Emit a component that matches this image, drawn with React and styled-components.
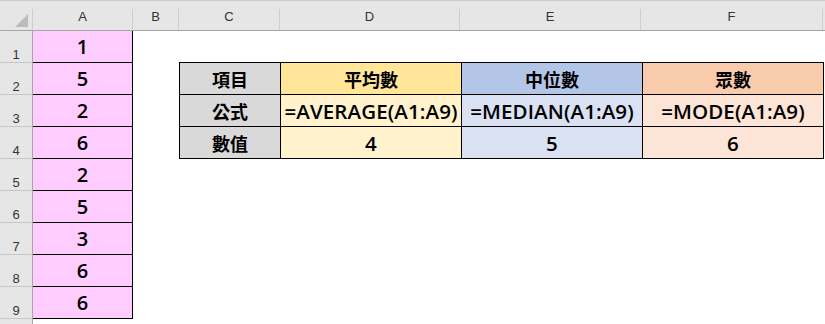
import styled, { createGlobalStyle } from "styled-components";

const GlobalStyle = createGlobalStyle`
  html, body {
    margin: 0;
    padding: 0;
    background: #ffffff;
  }
  body {
    width: 825px;
    height: 324px;
    overflow: hidden;
  }
`;

const columns = [
  { key: "A", width: 100 },
  { key: "B", width: 46 },
  { key: "C", width: 101 },
  { key: "D", width: 180 },
  { key: "E", width: 181 },
  { key: "F", width: 182 },
];

const values = [1, 5, 2, 6, 2, 5, 3, 6, 6];

const summary = [
  { head: "平均數", formula: "=AVERAGE(A1:A9)", result: 4, tone: "yellow" },
  { head: "中位數", formula: "=MEDIAN(A1:A9)", result: 5, tone: "blue" },
  { head: "眾數", formula: "=MODE(A1:A9)", result: 6, tone: "orange" },
];

const tones = {
  yellow: { head: "#ffe699", body: "#fff2cc" },
  blue: { head: "#b4c6e7", body: "#d9e1f2" },
  orange: { head: "#f8cbad", body: "#fce4d6" },
};

export default function App() {
  return (
    <>
      <GlobalStyle />
      <Sheet>
        <TopStrip />
        <HeaderRow>
          <Corner>
            <CornerMark />
          </Corner>
          {columns.map((c) => (
            <ColHead key={c.key} $w={c.width}>
              {c.key}
            </ColHead>
          ))}
        </HeaderRow>

        <Body>
          <RowHeads>
            {values.map((_, i) => (
              <RowHead key={i}>{i + 1}</RowHead>
            ))}
            <RowHead />
          </RowHeads>

          <ColumnA>
            {values.map((v, i) => (
              <PinkCell key={i}>{v}</PinkCell>
            ))}
          </ColumnA>

          <Spacer />

          <TableArea>
            <Stats>
              <tbody>
                <tr>
                  <Label>項目</Label>
                  {summary.map((s) => (
                    <Cell key={s.head} $bg={tones[s.tone].head}>
                      {s.head}
                    </Cell>
                  ))}
                </tr>
                <tr>
                  <Label>公式</Label>
                  {summary.map((s) => (
                    <Cell key={s.head} $bg={tones[s.tone].body} $latin>
                      {s.formula}
                    </Cell>
                  ))}
                </tr>
                <tr>
                  <Label>數值</Label>
                  {summary.map((s) => (
                    <Cell key={s.head} $bg={tones[s.tone].body} $latin>
                      {s.result}
                    </Cell>
                  ))}
                </tr>
              </tbody>
            </Stats>
          </TableArea>
        </Body>
      </Sheet>
    </>
  );
}

const Sheet = styled.div`
  display: flex;
  flex-direction: column;
  width: 825px;
  height: 324px;
  overflow: hidden;
  font-family: "Liberation Sans", "Noto Sans CJK TC", sans-serif;
`;

const TopStrip = styled.div`
  height: 1px;
  background: #f3f3f3;
  border-bottom: 1px solid #c9c9c9;
`;

const HeaderRow = styled.div`
  display: flex;
  height: 30px;
  background: #e6e6e6;
  border-bottom: 1px solid #a6a6a6;
`;

const Corner = styled.div`
  position: relative;
  width: 32px;
  flex: none;
  border-right: 1px solid #cfcfcf;
  margin-top: 8px;
`;

const CornerMark = styled.div`
  position: absolute;
  right: 4px;
  bottom: 3px;
  width: 0;
  height: 0;
  border-left: 13px solid transparent;
  border-bottom: 13px solid #bcbcbc;
`;

const ColHead = styled.div`
  flex: none;
  width: ${(p) => p.$w}px;
  display: flex;
  align-items: center;
  justify-content: center;
  box-sizing: border-box;
  margin-top: 8px;
  padding-bottom: 6px;
  border-right: 1px solid #cfcfcf;
  font-size: 13px;
  color: #333;
`;

const Body = styled.div`
  display: flex;
  align-items: flex-start;
`;

const RowHeads = styled.div`
  display: flex;
  flex-direction: column;
  width: 32px;
  flex: none;
  background: #e6e6e6;
  border-right: 1px solid #a6a6a6;
`;

const RowHead = styled.div`
  height: 30px;
  border-bottom: 1px solid #c6c6c6;
  display: flex;
  align-items: flex-end;
  justify-content: center;
  padding-bottom: 1px;
  font-size: 13px;
  color: #333;
  line-height: 1;
`;

const ColumnA = styled.div`
  display: flex;
  flex-direction: column;
  width: 100px;
  flex: none;
`;

const PinkCell = styled.div`
  height: 32px;
  box-sizing: border-box;
  background: #ffccff;
  border-right: 1px solid #000;
  border-bottom: 1px solid #000;
  display: flex;
  align-items: center;
  justify-content: center;
  font-family: "Open Sans", "Noto Sans CJK TC", sans-serif;
  font-weight: 600;
  font-size: 20px;
  color: #000;
`;

const Spacer = styled.div`
  width: 46px;
  flex: none;
`;

const TableArea = styled.div`
  padding-top: 31px;
`;

const Stats = styled.table`
  border-collapse: collapse;
  table-layout: fixed;
  font-family: "Open Sans", "Noto Sans CJK TC", sans-serif;
  font-weight: 600;
  font-size: 18px;
  color: #000;
`;

const Label = styled.td`
  width: 100px;
  height: 31px;
  padding: 0;
  border: 1px solid #000;
  background: #d9d9d9;
  text-align: center;
  white-space: nowrap;
`;

const Cell = styled.td`
  width: 180px;
  height: 31px;
  padding: 0;
  border: 1px solid #000;
  background: ${(p) => p.$bg};
  text-align: center;
  white-space: nowrap;
  font-size: ${(p) => (p.$latin ? "20.5px" : "18px")};
  letter-spacing: ${(p) => (p.$latin ? "0.1px" : "0")};
`;
